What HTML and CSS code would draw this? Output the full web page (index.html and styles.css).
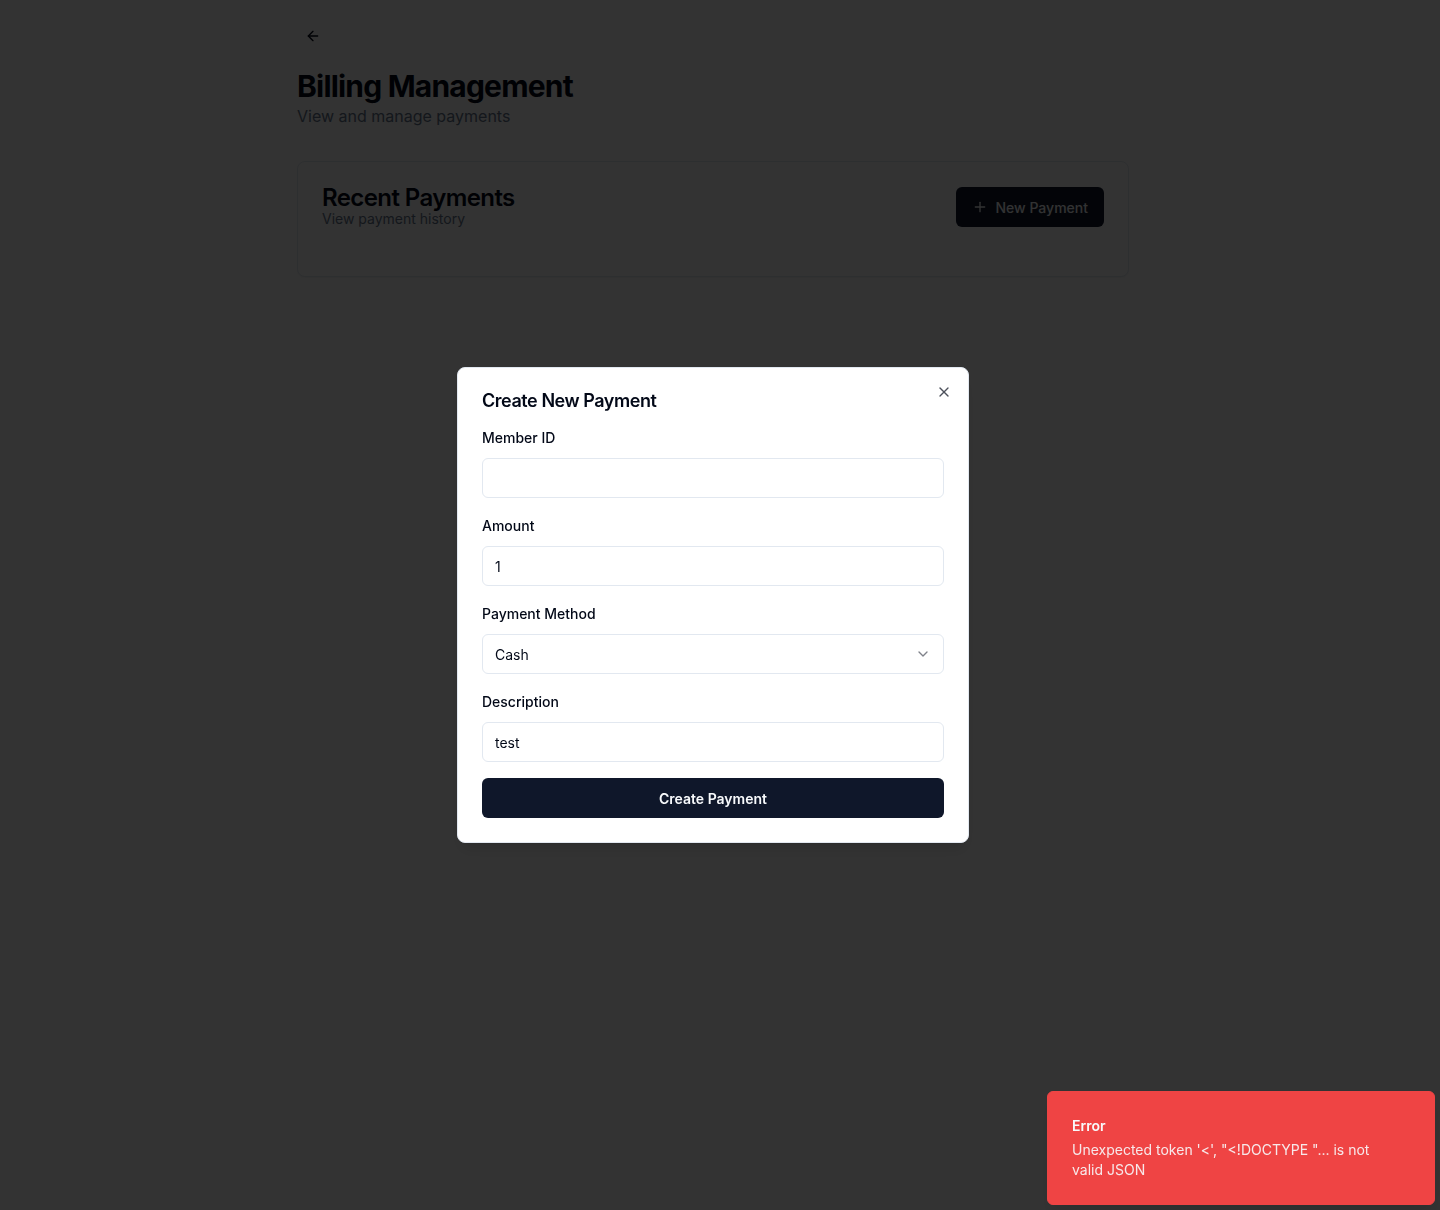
FILE: index.html
```html
<!DOCTYPE html>
<html lang="en">
<head>
<meta charset="utf-8">
<title>Billing Management</title>
<link rel="stylesheet" href="styles.css">
</head>
<body>
<div class="page">
  <main class="container">
    <button class="back-btn" aria-label="Back">
      <svg width="16" height="16" viewBox="0 0 24 24" fill="none" stroke="currentColor" stroke-width="2" stroke-linecap="round" stroke-linejoin="round"><path d="m12 19-7-7 7-7"/><path d="M19 12H5"/></svg>
    </button>
    <h1 class="page-title">Billing Management</h1>
    <p class="page-sub">View and manage payments</p>

    <section class="card">
      <div class="card-header">
        <div>
          <h2 class="card-title">Recent Payments</h2>
          <p class="card-desc">View payment history</p>
        </div>
        <button class="btn-primary">
          <svg width="16" height="16" viewBox="0 0 24 24" fill="none" stroke="currentColor" stroke-width="2" stroke-linecap="round" stroke-linejoin="round"><path d="M5 12h14"/><path d="M12 5v14"/></svg>
          New Payment
        </button>
      </div>
      <div class="card-content"></div>
    </section>
  </main>
</div>

<div class="overlay"></div>

<div class="dialog" role="dialog">
  <h2 class="dialog-title">Create New Payment</h2>
  <form class="form">
    <div class="field">
      <label class="label">Member ID</label>
      <div class="input"></div>
    </div>
    <div class="field">
      <label class="label">Amount</label>
      <div class="input">1</div>
    </div>
    <div class="field">
      <label class="label">Payment Method</label>
      <div class="input select">
        <span>Cash</span>
        <svg class="chev" width="16" height="16" viewBox="0 0 24 24" fill="none" stroke="currentColor" stroke-width="2" stroke-linecap="round" stroke-linejoin="round"><path d="m6 9 6 6 6-6"/></svg>
      </div>
    </div>
    <div class="field">
      <label class="label">Description</label>
      <div class="input">test</div>
    </div>
    <button type="button" class="btn-submit">Create Payment</button>
  </form>
  <button class="close" aria-label="Close">
    <svg width="16" height="16" viewBox="0 0 24 24" fill="none" stroke="currentColor" stroke-width="2" stroke-linecap="round" stroke-linejoin="round"><path d="M18 6 6 18"/><path d="m6 6 12 12"/></svg>
  </button>
</div>

<div class="toast" role="alert">
  <div class="toast-title">Error</div>
  <div class="toast-desc">Unexpected token '&lt;', "&lt;!DOCTYPE "... is not valid JSON</div>
</div>
</body>
</html>
```

FILE: styles.css
```css
* { box-sizing: border-box; }
html, body {
  margin: 0;
  padding: 0;
  background: #ffffff;
  font-family: Inter, "Noto Sans", "Liberation Sans", sans-serif;
  color: #020817;
  height: 100%;
  overflow: hidden;
}
.page {
  width: 1426px;
}
.container {
  width: 832px;
  margin: 0 auto;
  padding-top: 20px;
}
.back-btn {
  width: 32px;
  height: 32px;
  display: flex;
  align-items: center;
  justify-content: center;
  background: transparent;
  border: 0;
  padding: 0;
  color: #020817;
  border-radius: 6px;
  margin-bottom: 16px;
}
.page-title {
  margin: 0;
  font-size: 30px;
  line-height: 36px;
  font-weight: 700;
  letter-spacing: -0.8px;
}
.page-sub {
  margin: 0 0 33px;
  font-size: 16px;
  line-height: 24px;
  color: #64748b;
}
.card {
  border: 1px solid #e2e8f0;
  border-radius: 8px;
  background: #fff;
  box-shadow: 0 1px 2px rgba(0,0,0,0.05);
}
.card-header {
  display: flex;
  justify-content: space-between;
  align-items: flex-start;
  padding: 25px 24px 24px;
}
.card-title {
  margin: 0;
  font-size: 24px;
  line-height: 22px;
  font-weight: 600;
  letter-spacing: -0.6px;
}
.card-desc {
  margin: 0;
  font-size: 14px;
  line-height: 20px;
  color: #64748b;
}
.card-content {
  height: 23px;
}
.btn-primary {
  height: 40px;
  padding: 0 16px;
  display: flex;
  align-items: center;
  gap: 8px;
  background: #0f172a;
  color: #f8fafc;
  border: 0;
  border-radius: 6px;
  font-family: inherit;
  font-size: 14px;
  font-weight: 500;
}
.overlay {
  position: fixed;
  inset: 0;
  background: rgba(0,0,0,0.8);
}
.dialog {
  position: fixed;
  left: 457px;
  top: 367px;
  width: 512px;
  background: #ffffff;
  border: 1px solid #e2e8f0;
  border-radius: 8px;
  padding: 24px;
  box-shadow: 0 10px 15px -3px rgba(0,0,0,0.1), 0 4px 6px -4px rgba(0,0,0,0.1);
  display: flex;
  flex-direction: column;
  gap: 16px;
}
.dialog-title {
  margin: 0;
  font-size: 18px;
  line-height: 18px;
  font-weight: 600;
  letter-spacing: -0.45px;
}
.form {
  display: flex;
  flex-direction: column;
  gap: 16px;
}
.field {
  display: flex;
  flex-direction: column;
  gap: 8px;
}
.label {
  font-size: 14px;
  line-height: 24px;
  font-weight: 500;
  color: #020817;
}
.input {
  height: 40px;
  border: 1px solid #e2e8f0;
  border-radius: 6px;
  padding: 0 12px;
  display: flex;
  align-items: center;
  font-size: 14px;
  color: #020817;
  background: #fff;
}
.select {
  justify-content: space-between;
}
.chev {
  opacity: 0.5;
}
.btn-submit {
  height: 40px;
  width: 100%;
  border: 0;
  border-radius: 6px;
  background: #0f172a;
  color: #f8fafc;
  font-family: inherit;
  font-size: 14px;
  font-weight: 600;
}
.close {
  position: absolute;
  right: 16px;
  top: 16px;
  width: 16px;
  height: 16px;
  padding: 0;
  border: 0;
  background: transparent;
  color: #020817;
  opacity: 0.7;
  display: flex;
}
.toast {
  position: fixed;
  left: 1047px;
  top: 1091px;
  width: 388px;
  background: #ef4444;
  border: 1px solid #ef4444;
  border-radius: 6px;
  padding: 24px 32px 24px 24px;
  color: #f8fafc;
  display: flex;
  flex-direction: column;
  gap: 4px;
  box-shadow: 0 10px 15px -3px rgba(0,0,0,0.1);
}
.toast-title {
  font-size: 14px;
  line-height: 20px;
  font-weight: 600;
}
.toast-desc {
  font-size: 14px;
  line-height: 20px;
  opacity: 0.9;
}
```
